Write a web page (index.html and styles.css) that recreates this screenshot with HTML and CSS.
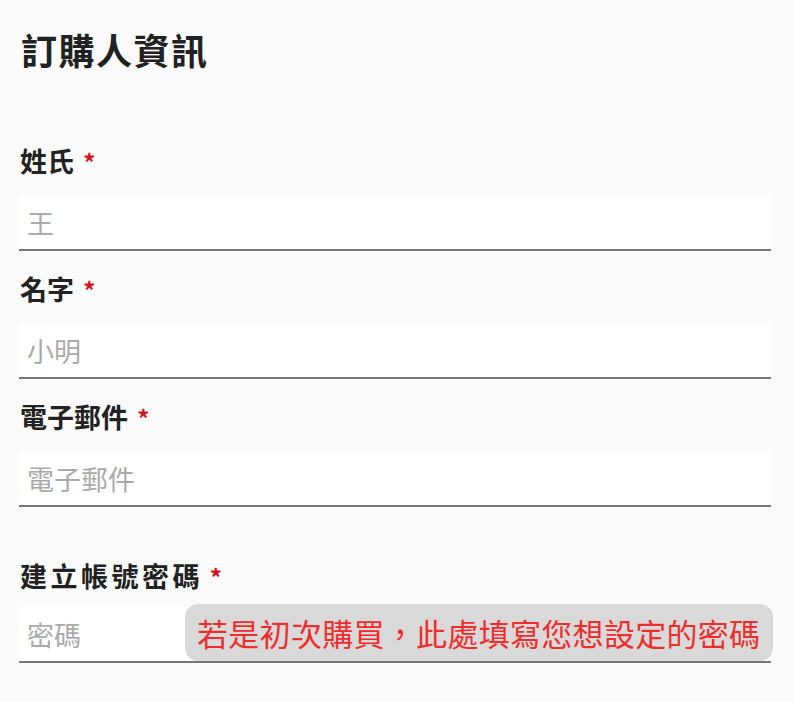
FILE: index.html
```html
<!DOCTYPE html>
<html lang="zh-Hant">
<head>
    <meta charset="UTF-8">
    <meta name="viewport" content="width=device-width, initial-scale=1.0">
    <title>訂購人資訊</title>
    <link rel="stylesheet" href="styles.css">
</head>
<body>

<div class="buyer-form">
    <h1 class="form-title">訂購人資訊</h1>

    <div class="field">
        <label for="last-name">姓氏 <span class="required">*</span></label>
        <input type="text" id="last-name" placeholder="王">
    </div>

    <div class="field">
        <label for="first-name">名字 <span class="required">*</span></label>
        <input type="text" id="first-name" placeholder="小明">
    </div>

    <div class="field">
        <label for="email">電子郵件 <span class="required">*</span></label>
        <input type="email" id="email" placeholder="電子郵件">
    </div>

    <div class="field field-account">
        <label for="password">建立帳號密碼 <span class="required">*</span></label>
        <div class="input-wrap">
            <input type="password" id="password" placeholder="密碼">
            <div class="hint">若是初次購買，此處填寫您想設定的密碼</div>
        </div>
    </div>
</div>

</body>
</html>
```

FILE: styles.css
```css
body {
    font-family: "Noto Sans CJK TC", "Noto Sans", sans-serif;
    background-color: #fafafa;
    color: #222;
    margin: 0;
    padding: 0;
}
.buyer-form {
    padding: 27px 23px 0 19px;
}
.form-title {
    font-size: 36px;
    line-height: 44px;
    font-weight: 700;
    letter-spacing: 1.5px;
    margin: 0 0 72px 2px;
}
.field + .field {
    margin-top: 20px;
}
.field.field-account {
    margin-top: 51px;
}
.field label {
    display: block;
    font-size: 27px;
    line-height: 36px;
    font-weight: 700;
    margin: 0 0 15px 1px;
}
.field-account label {
    letter-spacing: 3.5px;
    word-spacing: -3px;
    margin-bottom: 12px;
}
.required {
    color: #d0121b;
    font-size: 24px;
    margin-left: 3px;
}
.field-account .required {
    margin-left: 0;
}
.field input {
    display: block;
    width: 100%;
    height: 56px;
    box-sizing: border-box;
    border: none;
    border-bottom: 2px solid #777;
    background-color: #fff;
    padding: 0 8px;
    font-family: inherit;
    font-size: 27px;
    color: #222;
    outline: none;
}
.field input::placeholder {
    color: #aaa;
}
.input-wrap {
    position: relative;
}
.hint {
    position: absolute;
    left: 166px;
    right: -2px;
    top: -3px;
    height: 57px;
    display: flex;
    align-items: center;
    padding: 0 12px;
    box-sizing: border-box;
    background-color: #d9d9d9;
    border-radius: 13px;
    color: #ee2d2d;
    font-size: 31px;
    letter-spacing: 0.3px;
    white-space: nowrap;
}
```
